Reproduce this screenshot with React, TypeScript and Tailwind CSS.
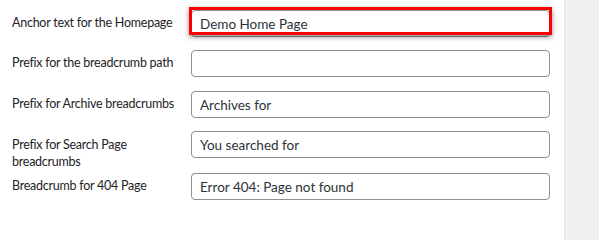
import React from "react";

const rows = [
  { label: "Anchor text for the Homepage", value: "Demo Home Page", h: "h-[40px]", pt: "pt-[4px]", highlight: true },
  { label: "Prefix for the breadcrumb path", value: "", h: "h-[41px]", pt: "pt-[4px]" },
  { label: "Prefix for Archive breadcrumbs", value: "Archives for", h: "h-[40px]", pt: "pt-[4px]" },
  { label: "Prefix for Search Page breadcrumbs", value: "You searched for", h: "h-[42px]", pt: "pt-[5px]" },
  { label: "Breadcrumb for 404 Page", value: "Error 404: Page not found", h: "h-[40px]", pt: "pt-[4px]" },
];

export default function App() {
  return (
    <div className="flex w-[599px] h-[240px] bg-white overflow-hidden" style={{ fontFamily: 'Lato, "Noto Sans", sans-serif' }}>
      <div className="w-[564px] shrink-0 pl-[12px] pt-[10px]">
        {rows.map((r, i) => (
          <div key={i} className={`grid grid-cols-[179px_359px] items-start ${r.h}`}>
            <label className={`${r.pt} text-[12.5px] leading-[17px] tracking-[-0.25px] text-[#1d2327] pr-[4px]`}>{r.label}</label>
            <div className="relative">
              <input
                readOnly
                value={r.value}
                className="block w-[359px] h-[27px] px-[8px] text-[13.5px] text-[#2c3338] bg-white border border-[#8c8f94] rounded-[4px] outline-none"
                style={{ fontFamily: 'Lato, "Noto Sans", sans-serif' }}
              />
              {r.highlight && (
                <div className="absolute left-[-2px] top-[-3px] w-[363px] h-[28px] border-[3px] border-[#ff0000] shadow-[0_2px_5px_rgba(0,0,0,0.45)] pointer-events-none" />
              )}
            </div>
          </div>
        ))}
      </div>
      <div className="flex-1 bg-[#f0f0f1] border-l border-[#e4e4e4]" />
    </div>
  );
}
